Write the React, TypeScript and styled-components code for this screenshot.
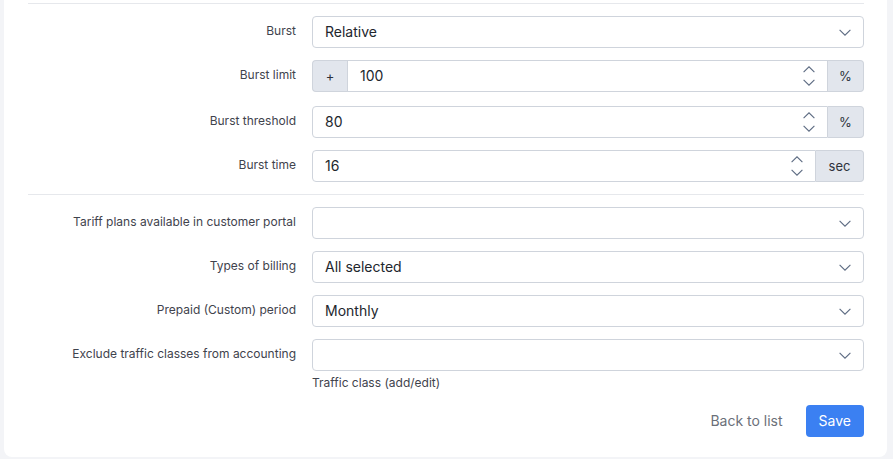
import React from "react";
import styled, { createGlobalStyle } from "styled-components";

const Global = createGlobalStyle`
  html, body { margin: 0; padding: 0; background: #f3f4f7; }
  body { font-family: Inter, "Noto Sans", sans-serif; }
  * { box-sizing: border-box; }
`;

const Page = styled.div`
  width: 893px;
  height: 459px;
  overflow: hidden;
  background: #f3f4f7;
`;

const Card = styled.div`
  margin-left: 4px;
  width: 883px;
  height: 457px;
  background: #ffffff;
  border-radius: 0 0 8px 8px;
  padding: 3px 23px 0 24px;
  display: flex;
  flex-direction: column;
`;

const Divider = styled.div`
  height: 1px;
  background: #e6e8ec;
  margin-bottom: 12px;
`;

const Row = styled.div<{ $gap?: number }>`
  display: grid;
  grid-template-columns: 268px 1fr;
  column-gap: 16px;
  align-items: start;
  margin-bottom: ${(p) => p.$gap ?? 12}px;
`;

const Label = styled.label`
  font-size: 12px;
  color: #3f434d;
  text-align: right;
  line-height: 30px;
  white-space: nowrap;
`;

const Field = styled.div`
  display: flex;
  flex-direction: column;
`;

const Box = styled.div`
  height: 32px;
  display: flex;
  align-items: stretch;
`;

const Control = styled.div<{ $left?: boolean; $right?: boolean }>`
  flex: 1;
  display: flex;
  align-items: center;
  justify-content: space-between;
  border: 1px solid #cfd4dc;
  background: #fff;
  border-radius: ${(p) =>
    `${p.$left ? 0 : 4}px ${p.$right ? 0 : 4}px ${p.$right ? 0 : 4}px ${p.$left ? 0 : 4}px`};
  padding: 0 12px;
  font-size: 14px;
  color: #22262d;
`;

const Value = styled.span`
  margin-top: -1px;
`;

const Addon = styled.div<{ $w: number; $side: "left" | "right" }>`
  width: ${(p) => p.$w}px;
  flex: none;
  display: flex;
  align-items: center;
  justify-content: center;
  background: #e2e6ed;
  border: 1px solid #cfd4dc;
  ${(p) => (p.$side === "left" ? "border-right: none;" : "border-left: none;")}
  border-radius: ${(p) => (p.$side === "left" ? "4px 0 0 4px" : "0 4px 4px 0")};
  font-size: 13px;
  color: #2d323b;
`;

const Help = styled.div`
  margin-top: 4px;
  font-size: 12px;
  line-height: 16px;
  color: #3f434d;
`;

const Actions = styled.div`
  margin-top: 14px;
  display: flex;
  justify-content: flex-end;
  gap: 10px;
`;

const Button = styled.button<{ $primary?: boolean }>`
  height: 32px;
  padding: 0 13px 1px;
  border: none;
  border-radius: 4px;
  font-family: Inter, "Noto Sans", sans-serif;
  font-size: 14px;
  cursor: pointer;
  background: ${(p) => (p.$primary ? "#3b80f2" : "transparent")};
  color: ${(p) => (p.$primary ? "#ffffff" : "#6b7079")};
`;

const Chevron = ({ up }: { up?: boolean }) => (
  <svg width="12" height="7" viewBox="0 0 12 7" fill="none">
    <path
      d={up ? "M0.6 6.2 L6 0.8 L11.4 6.2" : "M0.6 0.8 L6 6.2 L11.4 0.8"}
      stroke="#5d6b82"
      strokeWidth="1.1"
    />
  </svg>
);

const SpinWrap = styled.div`
  display: flex;
  flex-direction: column;
  gap: 6px;
`;

const Spinner = () => (
  <SpinWrap>
    <Chevron up />
    <Chevron />
  </SpinWrap>
);

const Select = ({ value }: { value?: string }) => (
  <Box>
    <Control>
      <Value>{value ?? ""}</Value>
      <Chevron />
    </Control>
  </Box>
);

export default function App() {
  return (
    <Page>
      <Global />
      <Card>
        <Divider />
        <Row>
          <Label>Burst</Label>
          <Select value="Relative" />
        </Row>
        <Row $gap={14}>
          <Label>Burst limit</Label>
          <Box>
            <Addon $w={35} $side="left">+</Addon>
            <Control $left $right>
              <Value>100</Value>
              <Spinner />
            </Control>
            <Addon $w={36} $side="right">%</Addon>
          </Box>
        </Row>
        <Row>
          <Label>Burst threshold</Label>
          <Box>
            <Control $right>
              <Value>80</Value>
              <Spinner />
            </Control>
            <Addon $w={36} $side="right">%</Addon>
          </Box>
        </Row>
        <Row>
          <Label>Burst time</Label>
          <Box>
            <Control $right>
              <Value>16</Value>
              <Spinner />
            </Control>
            <Addon $w={48} $side="right">sec</Addon>
          </Box>
        </Row>
        <Divider />
        <Row>
          <Label>Tariff plans available in customer portal</Label>
          <Select />
        </Row>
        <Row>
          <Label>Types of billing</Label>
          <Select value="All selected" />
        </Row>
        <Row>
          <Label>Prepaid (Custom) period</Label>
          <Select value="Monthly" />
        </Row>
        <Row $gap={0}>
          <Label>Exclude traffic classes from accounting</Label>
          <Field>
            <Select />
            <Help>Traffic class (add/edit)</Help>
          </Field>
        </Row>
        <Actions>
          <Button>Back to list</Button>
          <Button $primary>Save</Button>
        </Actions>
      </Card>
    </Page>
  );
}
